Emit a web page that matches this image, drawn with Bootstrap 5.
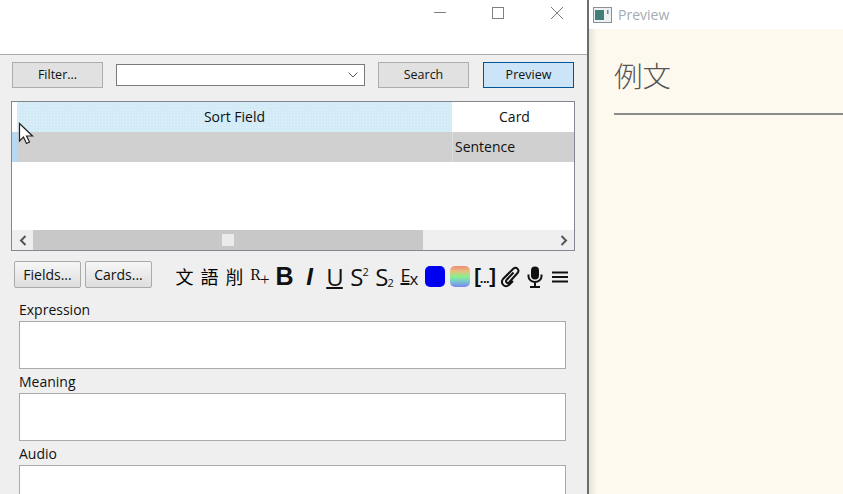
<!DOCTYPE html>
<html lang="en">
<head>
  <meta charset="UTF-8" />
  <meta name="viewport" content="width=device-width, initial-scale=1" />
  <title>Browse - Preview</title>
  <link href="https://cdn.jsdelivr.net/npm/bootstrap@5.3.0/dist/css/bootstrap.min.css" rel="stylesheet" />
  <style>
    html, body {
      height: 100%;
      overflow: hidden;
      background: #fff;
    }

    body {
      font-family: "Open Sans", "Noto Sans CJK TC", sans-serif;
      font-size: 14px;
      color: #111;
    }

    .browser-pane {
      width: 587px;
      height: 494px;
      overflow: hidden;
      background: #efefef;
    }

    .browser-pane > * { flex-shrink: 0; }

    .title-strip {
      height: 55px;
      background: #fff;
      border-bottom: 1px solid #aaa;
      padding-top: 7px;
    }

    .win-ctl {
      width: 13px;
      height: 13px;
      display: block;
      fill: none;
      stroke: #808080;
      stroke-width: 1;
    }

    .win-ctl-gap { gap: 46px; padding-right: 23px; }

    .search-row {
      padding: 7px 13px 0 12px;
      height: 46px;
    }

    .flat-btn {
      width: 91px;
      height: 26px;
      padding: 0;
      font-size: 12.5px;
      color: #111;
      background: #e1e1e1;
      border: 1px solid #adadad;
      border-radius: 0;
      line-height: 24px;
    }

    .flat-btn-on {
      background: #cce4f7;
      border-color: #005499;
    }

    .combo-box {
      width: 249px;
      height: 22px;
      margin: 2px 13px 0;
      background: #fff;
      border: 1px solid #7a7a7a;
      padding-right: 6px;
    }

    .combo-box svg { width: 10px; height: 6px; }

    .note-grid {
      width: 564px;
      height: 150px;
      margin-left: 11px;
      background: #fff;
      border: 1px solid #828790;
    }

    .grid-row { height: 30px; }

    .gutter { width: 5px; }
    .gutter-head { background: #fff; }
    .gutter-sel { background: #b9d9f2; }

    .col-sort { width: 435px; }
    .col-card { width: 122px; }
    .col-card-head { padding-left: 3px; }

    .head-sort {
      background-color: #d3ebf7;
      background-image: radial-gradient(#e1f2fa 1px, transparent 1px);
      background-size: 3px 3px;
    }

    .cell-text { font-size: 14px; line-height: 30px; }

    .row-picked { background: #d0d0d0; }
    .col-card-body { border-left: 1px solid #dcdcdc; padding-left: 2px; }

    .grid-blank { height: 68px; margin-left: 5px; }

    .h-scroll {
      height: 20px;
      background: #efefef;
    }

    .scroll-arrow {
      width: 21px;
      height: 20px;
    }

    .scroll-arrow svg { width: 10px; height: 11px; }

    .scroll-track {
      width: 390px;
      height: 20px;
      background: #c8c8c8;
    }

    .scroll-grip {
      width: 12px;
      height: 12px;
      background: #eaeaea;
    }

    .tool-row {
      height: 36px;
      margin-top: 10px;
      padding-left: 14px;
    }

    .soft-btn {
      height: 27px;
      width: 67px;
      padding: 0;
      font-size: 14px;
      color: #111;
      background: linear-gradient(#f6f6f6, #dedede);
      border: 1px solid #aaa;
      border-radius: 2px;
      line-height: 24px;
    }

    .soft-btn + .soft-btn { margin-left: 4px; }

    .tool-set { margin-left: 20px; padding-top: 2px; }

    .tool-ico {
      width: 25px;
      height: 27px;
      text-align: center;
      line-height: 27px;
      color: #111;
      white-space: nowrap;
    }

    .ico-han { font-size: 18px; font-family: "Noto Sans CJK TC", serif; font-weight: 400; color: #000; }
    .ico-serif { font-family: "Liberation Serif", serif; font-size: 16px; line-height: 24px; padding-left: 1px; }
    .ico-serif span { font-size: 17px; position: relative; top: 5px; margin-left: -1px; font-weight: 300; }
    .ico-bold { font-family: "Liberation Sans", sans-serif; font-weight: 700; font-size: 25px; }
    .ico-ital { font-family: "Liberation Sans", sans-serif; font-weight: 700; font-style: italic; font-size: 24px; }
    .ico-line { font-family: "Open Sans", sans-serif; font-size: 24px; letter-spacing: -1px; }
    .ico-under { text-decoration: underline; text-underline-offset: 1px; text-decoration-thickness: 1.5px; }
    .ico-line sup, .ico-line sub { font-size: 11px; letter-spacing: 0; }
    .ico-line sup { top: -10px; }
    .ico-line sub { bottom: -1px; }
    .ico-erase { font-size: 18px; line-height: 24px; }
    .ico-erase sub { font-size: 17px; bottom: -3px; }
    .ico-cloze { font-family: "Liberation Sans", sans-serif; font-size: 20px; font-weight: 700; letter-spacing: -1px; }
    .ico-cloze b { font-size: 13px; letter-spacing: -0.5px; }

    .swatch {
      width: 20px;
      height: 21px;
      border-radius: 5px;
    }

    .swatch-blue { background: #0000f0; }
    .swatch-rainbow { background: linear-gradient(#f08a78, #e6c080 25%, #8cef88 50%, #78d0c8 70%, #7a86ee); }

    .tool-ico svg { width: 22px; height: 22px; }

    .field-stack { padding: 2px 21px 0 19px; }
    .field-name { line-height: 22px; height: 22px; font-size: 14px; }
    .field-box {
      height: 48px;
      background: #fff;
      border: 1px solid #aaa;
      margin-bottom: 2px;
    }

    .arrow-cursor {
      position: absolute;
      left: 18px;
      top: 122px;
      width: 18px;
      height: 25px;
    }

    .preview-pane {
      background: #fff;
      border-left: 2px solid #6d6d6d;
    }

    .preview-title {
      height: 29px;
      padding-left: 4px;
      color: #a3abb3;
      font-size: 14px;
    }

    .preview-title svg { width: 19px; height: 16px; margin-right: 6px; }

    .preview-body {
      background: linear-gradient(to right, #e8e3da, #fef9ef 8px);
      padding: 26px 0 0 25px;
    }

    .preview-head {
      font-family: "Noto Sans CJK JP", serif;
      font-size: 28.5px;
      font-weight: 300;
      color: #555;
      line-height: 40px;
      height: 60px;
      border-bottom: 2px solid #8c8c8c;
      margin: 0;
    }
  </style>
</head>
<body>
  <div class="d-flex position-relative">

    <!-- Browser window -->
    <div class="browser-pane flex-shrink-0 d-flex flex-column">
      <div class="title-strip d-flex justify-content-end win-ctl-gap">
        <svg class="win-ctl" viewBox="0 0 13 13"><path d="M1 5.500H13" /></svg>
        <svg class="win-ctl" viewBox="0 0 13 13"><rect x="0.500" y="0.500" width="11" height="11" /></svg>
        <svg class="win-ctl" viewBox="0 0 13 13"><path d="M0 0L12 12M12 0L0 12" /></svg>
      </div>

      <div class="search-row d-flex align-items-start">
        <button class="btn flat-btn" type="button">Filter...</button>
        <div class="combo-box d-flex align-items-center justify-content-end">
          <svg viewBox="0 0 10 6"><path d="M0.500 0.500L5 5L9.500 0.500" fill="none" stroke="#555" /></svg>
        </div>
        <button class="btn flat-btn" type="button">Search</button>
        <button class="btn flat-btn flat-btn-on ms-auto" type="button">Preview</button>
      </div>

      <!-- Notes table -->
      <div class="note-grid d-flex flex-column">
        <div class="grid-row d-flex">
          <div class="gutter gutter-head"></div>
          <div class="col-sort head-sort cell-text text-center">Sort Field</div>
          <div class="col-card col-card-head cell-text text-center">Card</div>
        </div>
        <div class="grid-row d-flex row-picked">
          <div class="gutter gutter-sel"></div>
          <div class="col-sort"></div>
          <div class="col-card col-card-body cell-text">Sentence</div>
        </div>
        <div class="grid-blank"></div>
        <div class="h-scroll d-flex">
          <div class="scroll-arrow d-flex align-items-center justify-content-center flex-shrink-0">
            <svg viewBox="0 0 10 11"><path d="M7.500 1L3 5.500L7.500 10" fill="none" stroke="#555" stroke-width="2" /></svg>
          </div>
          <div class="scroll-track d-flex align-items-center justify-content-center">
            <div class="scroll-grip"></div>
          </div>
          <div class="scroll-arrow d-flex align-items-center justify-content-center ms-auto flex-shrink-0">
            <svg viewBox="0 0 10 11"><path d="M2.500 1L7 5.500L2.500 10" fill="none" stroke="#555" stroke-width="2" /></svg>
          </div>
        </div>
      </div>

      <!-- Editor toolbar -->
      <div class="tool-row d-flex align-items-start">
        <button class="btn soft-btn" type="button">Fields...</button>
        <button class="btn soft-btn" type="button">Cards...</button>
        <div class="tool-set d-flex">
          <div class="tool-ico ico-han">文</div>
          <div class="tool-ico ico-han">語</div>
          <div class="tool-ico ico-han">削</div>
          <div class="tool-ico ico-serif">R<span>+</span></div>
          <div class="tool-ico ico-bold">B</div>
          <div class="tool-ico ico-ital">I</div>
          <div class="tool-ico ico-line"><span class="ico-under">U</span></div>
          <div class="tool-ico ico-line">S<sup>2</sup></div>
          <div class="tool-ico ico-line">S<sub>2</sub></div>
          <div class="tool-ico ico-line ico-erase"><span class="ico-under">E</span><sub>x</sub></div>
          <div class="tool-ico d-flex align-items-center justify-content-center"><div class="swatch swatch-blue"></div></div>
          <div class="tool-ico d-flex align-items-center justify-content-center"><div class="swatch swatch-rainbow"></div></div>
          <div class="tool-ico ico-cloze">[<b>...</b>]</div>
          <div class="tool-ico d-flex align-items-center justify-content-center">
            <svg viewBox="0 0 22 22"><path d="M14.500 6.500L7.500 14C6 16 8.500 18 10 16.500L18.500 7C21 4 17.500 0.500 14.500 2.500L4 13C1 17 5.500 22.500 10 19L14 15" fill="none" stroke="#111" stroke-width="2" /></svg>
          </div>
          <div class="tool-ico d-flex align-items-center justify-content-center">
            <svg viewBox="0 0 22 22"><rect x="7" y="0.500" width="8" height="13" rx="4" fill="#111" /><path d="M4.500 8.500V10.500C4.500 14 8 16 11 16S17.500 14 17.500 10.500V8.500M11 16V20M6 21H16" fill="none" stroke="#111" stroke-width="2" /></svg>
          </div>
          <div class="tool-ico d-flex align-items-center justify-content-center">
            <svg viewBox="0 0 22 22"><path d="M3 6.500H19M3 11H19M3 15.500H19" fill="none" stroke="#111" stroke-width="2.200" /></svg>
          </div>
        </div>
      </div>

      <!-- Fields -->
      <div class="field-stack">
        <div class="field-name">Expression</div>
        <div class="field-box"></div>
        <div class="field-name">Meaning</div>
        <div class="field-box"></div>
        <div class="field-name">Audio</div>
        <div class="field-box"></div>
      </div>
    </div>

    <!-- Preview window -->
    <div class="preview-pane flex-grow-1 d-flex flex-column vh-100">
      <div class="preview-title d-flex align-items-center">
        <svg viewBox="0 0 19 16">
          <rect x="0.500" y="0.500" width="18" height="15" fill="#eef1f3" stroke="#8a9096" />
          <rect x="2" y="3" width="9" height="10" fill="#3f7f78" />
          <rect x="14" y="3" width="1.500" height="4" fill="#5a8f99" />
        </svg>
        <span>Preview</span>
      </div>
      <div class="preview-body flex-grow-1">
        <h1 class="preview-head">例文</h1>
      </div>
    </div>

    <!-- Mouse pointer over the table -->
    <svg class="arrow-cursor" viewBox="0 0 18 25">
      <path d="M1.500 1.500V19L5.500 15L8.500 21.500L11.500 20L8.500 14H14.500Z" fill="#fff" stroke="#222" stroke-width="1.200" />
    </svg>
  </div>

  <script src="https://cdn.jsdelivr.net/npm/bootstrap@5.3.0/dist/js/bootstrap.bundle.min.js"></script>
</body>
</html>
